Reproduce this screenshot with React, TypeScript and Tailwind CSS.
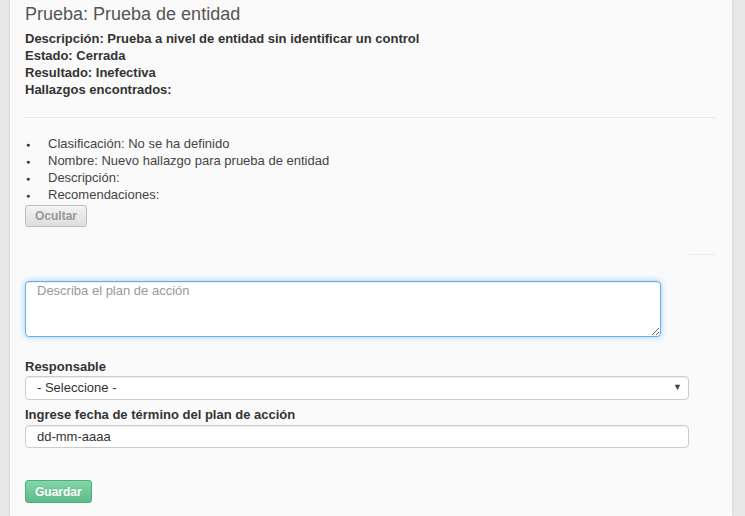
import React from 'react';

const font = { fontFamily: '"Liberation Sans", Arial, sans-serif' };

const hallazgo = [
  'Clasificación: No se ha definido',
  'Nombre: Nuevo hallazgo para prueba de entidad',
  'Descripción:',
  'Recomendaciones:',
];

const App: React.FC = () => {
  return (
    <div className="min-h-screen bg-[#e8e8e8] flex" style={font}>
      <div className="ml-[10px] w-[722px] min-h-[516px] bg-[#fafafa] shadow-[0_0_3px_rgba(0,0,0,0.12)] pl-[15px] pr-[16px] pt-[4px] text-[#333]">
        <h2 className="text-[18px] leading-[20px] text-[#555] font-normal">Prueba: Prueba de entidad</h2>

        <div className="mt-[6px] text-[13px] leading-[17px] font-bold">
          <div>Descripción: Prueba a nivel de entidad sin identificar un control</div>
          <div>Estado: Cerrada</div>
          <div>Resultado: Inefectiva</div>
          <div>Hallazgos encontrados:</div>
        </div>

        <div className="mt-[19px] h-px bg-[#e8e8e8]" />

        <ul className="mt-[17px] text-[13px] leading-[17px] text-[#444]">
          {hallazgo.map((item) => (
            <li key={item} className="flex items-center">
              <span className="w-[23px] pl-[1px] pt-[2px] text-[7px] leading-none text-[#333]">●</span>
              <span>{item}</span>
            </li>
          ))}
        </ul>

        <button className="mt-[1px] h-[22px] px-[9px] text-[12px] font-bold text-[#999] rounded-[3px] border border-[#bbb] bg-gradient-to-b from-[#f2f2f2] to-[#dedede] shadow-[inset_0_1px_0_rgba(255,255,255,0.6)]">
          Ocultar
        </button>

        <div className="flex justify-end mt-[27px]">
          <div className="w-[27px] h-px bg-[#ececec]" />
        </div>

        <textarea
          className="mt-[26px] block w-[636px] h-[56px] rounded-[4px] border border-[#66afe9] bg-white px-[11px] py-0 text-[13px] leading-[17px] text-[#333] placeholder:text-[#999] shadow-[inset_0_1px_1px_rgba(0,0,0,0.075),0_0_6px_rgba(102,175,233,0.6)] outline-none"
          placeholder="Describa el plan de acción"
        />

        <label className="block mt-[21px] text-[13px] leading-[17px] font-bold">Responsable</label>
        <div className="mt-[1px] relative w-[664px] h-[24px] rounded-[4px] border border-[#ccc] bg-white shadow-[inset_0_1px_1px_rgba(0,0,0,0.075)] flex items-center pl-[11px] text-[13px] text-[#333]">
          - Seleccione -
          <span className="absolute right-[6px] top-[6px] text-[9px] leading-none text-[#444]">▼</span>
        </div>

        <label className="block mt-[6px] text-[13px] leading-[17px] font-bold">Ingrese fecha de término del plan de acción</label>
        <div className="mt-[2px] w-[664px] h-[23px] rounded-[4px] border border-[#ccc] bg-white shadow-[inset_0_1px_1px_rgba(0,0,0,0.075)] flex items-center pl-[11px] text-[13px] text-[#333]">
          dd-mm-aaaa
        </div>

        <button className="mt-[32px] h-[23px] px-[9px] text-[12px] font-bold text-white rounded-[3px] border border-[#4fae7e] bg-gradient-to-b from-[#83d6a8] to-[#5cbb8a] [text-shadow:0_-1px_0_rgba(0,0,0,0.1)]">
          Guardar
        </button>
      </div>
      <div className="flex-1" />
    </div>
  );
};

export default App;
